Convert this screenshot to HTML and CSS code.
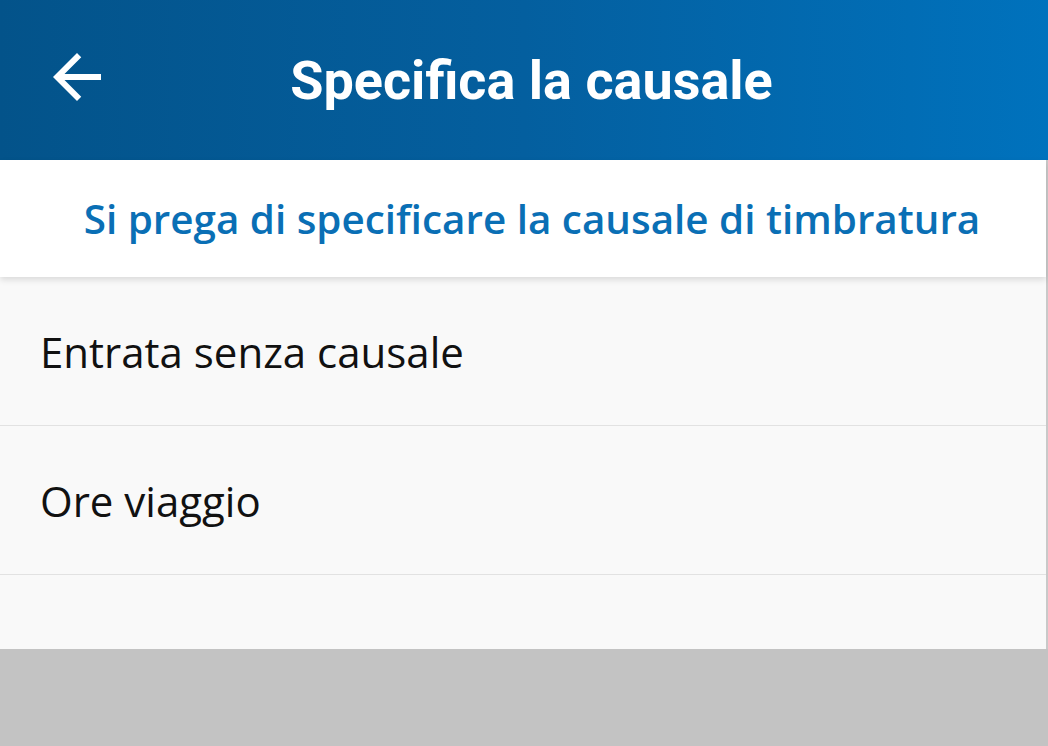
FILE: index.html
```html
<!DOCTYPE html>
<html lang="it">
<head>
  <meta charset="UTF-8">
  <title>Specifica la causale</title>
  <meta name="viewport" content="width=device-width, initial-scale=1.0">
  <link rel="stylesheet" href="styles.css">
</head>
<body>

<div class="screen">
  <header class="app-bar">
    <button class="back-btn" aria-label="Indietro">
      <svg viewBox="0 0 24 24" width="72" height="72">
        <path d="M20 11H7.83l5.59-5.59L12 4l-8 8 8 8 1.41-1.41L7.83 13H20v-2z" fill="#fff"/>
      </svg>
    </button>
    <h1 class="title">Specifica la causale</h1>
  </header>

  <div class="content">
    <div class="hint">Si prega di specificare la causale di timbratura</div>

    <ul class="reasons">
      <li>Entrata senza causale</li>
      <li>Ore viaggio</li>
    </ul>
    <div class="reasons-end"></div>
  </div>

  <div class="footer-space"></div>
</div>

</body>
</html>
```

FILE: styles.css
```css
html, body {
  margin: 0;
  padding: 0;
  height: 100%;
}
body {
  font-family: 'Open Sans', sans-serif;
  background-color: #c3c3c3;
  overflow: hidden;
}
.screen {
  display: flex;
  flex-direction: column;
  height: 746px;
}
.app-bar {
  height: 160px;
  display: flex;
  align-items: center;
  position: relative;
  background: linear-gradient(90deg, #03538a 0%, #045f9f 50%, #0072bd 100%);
  flex-shrink: 0;
}
.back-btn {
  position: absolute;
  left: 41px;
  top: 41px;
  width: 72px;
  height: 72px;
  padding: 0;
  border: none;
  background: none;
}
.back-btn svg {
  display: block;
}
.title {
  flex: 1;
  margin: 0;
  text-align: center;
  font-family: Roboto, sans-serif;
  font-weight: 700;
  font-size: 54px;
  color: #fff;
  padding-left: 15px;
}
.content {
  background-color: #f9f9f9;
  border-right: 2px solid #c9c9c9;
}
.hint {
  height: 117px;
  display: flex;
  align-items: center;
  justify-content: center;
  background-color: #fff;
  color: #0a6fb5;
  font-weight: 600;
  font-size: 40.4px;
  padding-left: 18px;
  box-shadow: 0 3px 6px rgba(0,0,0,0.12);
  position: relative;
}
.reasons {
  list-style: none;
  margin: 0;
  padding: 0;
}
.reasons li {
  height: 148px;
  display: flex;
  align-items: center;
  padding-left: 40px;
  font-size: 42px;
  color: #111;
  border-bottom: 1px solid #e2e2e2;
}
.reasons-end {
  height: 74px;
}
.footer-space {
  flex: 1;
}
```
